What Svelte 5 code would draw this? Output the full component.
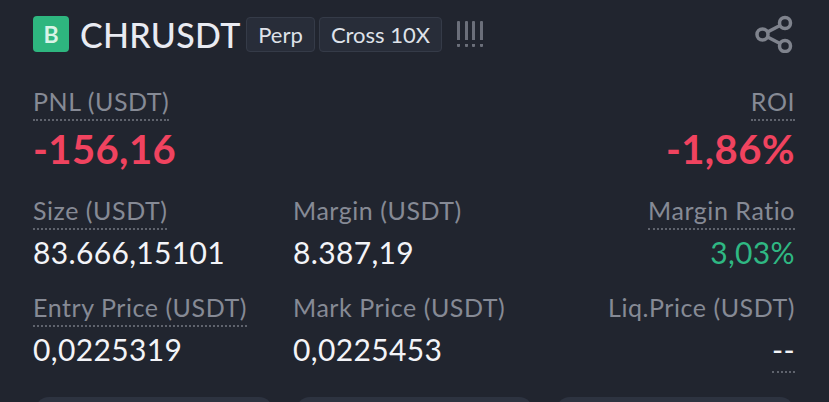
<script>
	const rows = [
		[
			{ label: 'Size (USDT)', value: '83.666,15101', dotted: true },
			{ label: 'Margin (USDT)', value: '8.387,19' },
			{ label: 'Margin Ratio', value: '3,03%', dotted: true, green: true }
		],
		[
			{ label: 'Entry Price (USDT)', value: '0,0225319', dotted: true },
			{ label: 'Mark Price (USDT)', value: '0,0225453' },
			{ label: 'Liq.Price (USDT)', value: '--', dottedValue: true }
		]
	];
</script>

<div class="position">
	<header class="head">
		<span class="side">B</span>
		<span class="symbol">CHRUSDT</span>
		<span class="tag">Perp</span>
		<span class="tag tag-wide">Cross 10X</span>
		<span class="risk"><i></i><i></i><i></i><i></i></span>
		<svg class="share" width="38" height="38" viewBox="0 0 38 38" fill="none" stroke="#7f838d" stroke-width="3.5">
			<circle cx="30" cy="8" r="5.5" />
			<circle cx="7.5" cy="19.5" r="5.5" />
			<circle cx="30" cy="31" r="5.5" />
			<path d="M12.5 17 25 10.5M12.5 22 25 28.5" />
		</svg>
	</header>

	<section class="pnl">
		<div class="cell">
			<span class="label dotted">PNL (USDT)</span>
			<span class="big">-156,16</span>
		</div>
		<div class="cell right">
			<span class="label dotted">ROI</span>
			<span class="big">-1,86%</span>
		</div>
	</section>

	{#each rows as row}
		<section class="row">
			{#each row as item, i}
				<div class="cell" class:right={i === 2}>
					<span class="label" class:dotted={item.dotted}>{item.label}</span>
					<span class="value" class:green={item.green} class:dotted={item.dottedValue}>{item.value}</span>
				</div>
			{/each}
		</section>
	{/each}

	<div class="actions">
		<button></button>
		<button></button>
		<button></button>
	</div>
</div>

<style>
	:global(body) {
		background: #21252f;
		overflow: hidden;
	}

	.position {
		height: 402px;
		box-sizing: border-box;
		padding: 16px 34px 0 33px;
		font-family: Lato, sans-serif;
		color: #868a95;
		overflow: hidden;
	}

	.head {
		display: flex;
		align-items: center;
		height: 36px;
		margin-bottom: 33px;
	}

	.side {
		width: 36px;
		height: 36px;
		border-radius: 4px;
		background: #2eb67f;
		color: #d8f3e7;
		font-size: 23px;
		font-weight: 700;
		line-height: 36px;
		text-align: center;
		margin-right: 11px;
	}

	.symbol {
		color: #e9ebf2;
		font-size: 34px;
		font-weight: 500;
		letter-spacing: 0.3px;
		margin-right: 6px;
		width: 160px;
		white-space: nowrap;
	}

	.tag {
		box-sizing: border-box;
		height: 35px;
		line-height: 33px;
		width: 69px;
		text-align: center;
		border: 1px solid #353b48;
		border-radius: 4px;
		background: #282d39;
		color: #dfe2e9;
		font-size: 22px;
		margin-right: 4px;
		white-space: nowrap;
	}

	.tag-wide {
		width: 123px;
	}

	.risk {
		display: flex;
		gap: 4.5px;
		margin-left: 11px;
	}

	.risk i {
		width: 3px;
		height: 26px;
		background: linear-gradient(#6b6f7a 0 19px, transparent 19px 23px, #6b6f7a 23px);
		border-radius: 1px;
	}

	.share {
		margin-left: auto;
		margin-right: 2px;
	}

	.pnl {
		display: flex;
		justify-content: space-between;
		margin-bottom: 17px;
	}

	.row {
		display: grid;
		grid-template-columns: 260px 1fr 1fr;
		margin-bottom: 17px;
	}

	.cell {
		display: flex;
		flex-direction: column;
		align-items: flex-start;
	}

	.right {
		align-items: flex-end;
	}

	.label {
		font-size: 25px;
		letter-spacing: 0.55px;
		line-height: 32px;
		padding-bottom: 2px;
		border-bottom: 2px solid transparent;
		white-space: nowrap;
	}

	.dotted {
		border-bottom: 2px dotted #5f636d;
	}

	.big {
		color: #f0435f;
		font-size: 40px;
		font-weight: 700;
		letter-spacing: 0.4px;
		line-height: 56px;
		white-space: nowrap;
	}

	.value {
		color: #f3f4f8;
		font-size: 30px;
		letter-spacing: 0.35px;
		line-height: 44px;
		white-space: nowrap;
	}

	.green {
		color: #2fb883;
	}

	.actions {
		display: grid;
		grid-template-columns: repeat(3, 1fr);
		gap: 23px;
		margin: 24px 1px 0 2px;
	}

	button {
		height: 40px;
		border: 0;
		border-radius: 14px;
		background: #2d3340;
	}
</style>
